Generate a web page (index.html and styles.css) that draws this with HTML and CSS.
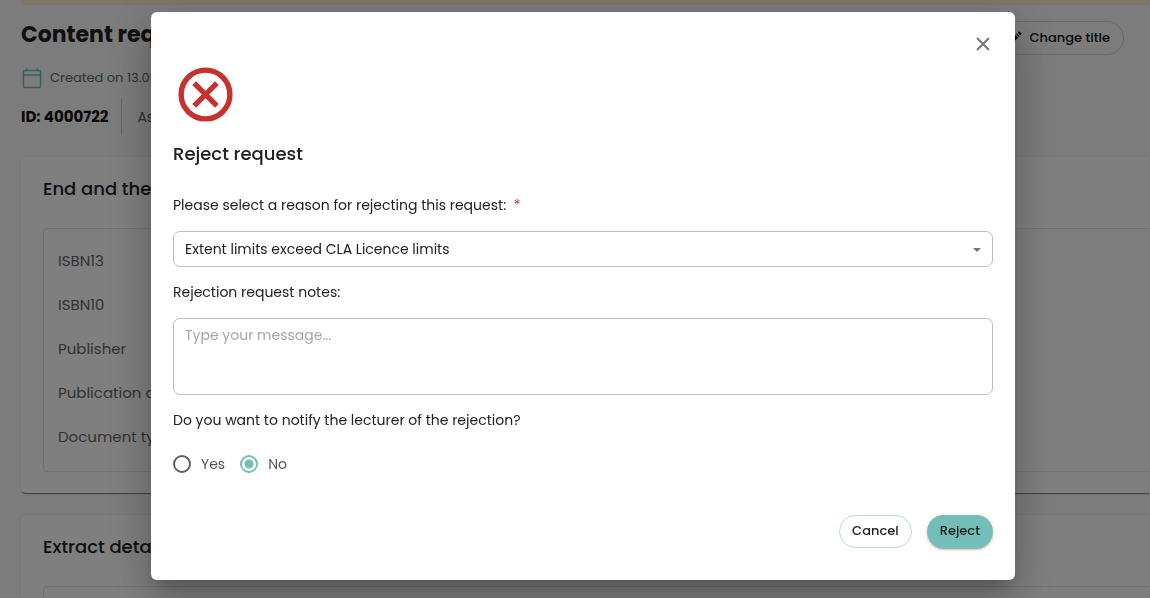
FILE: index.html
```html
<!DOCTYPE html>
<html lang="en">
<head>
  <meta charset="UTF-8">
  <meta name="viewport" content="width=device-width, initial-scale=1.0">
  <title>Content request</title>
  <link rel="stylesheet" href="styles.css">
</head>
<body>
  <main class="page">
    <div class="banner"></div>

    <header class="page-header">
      <h1>Content request</h1>
      <button type="button" class="btn btn-outline btn-title">
        <svg class="pencil" viewBox="0 0 24 24" aria-hidden="true">
          <path d="M3 17v4h4l9.500-9.500-4-4zM17.500 10.500l1.500-1.500-4-4-1.500 1.500zM20 8l1.500-1.500a1 1 0 0 0 0-1.500l-2.500-2.500a1 1 0 0 0-1.500 0l-1.500 1.500z"/>
        </svg>
        Change title
      </button>
    </header>

    <div class="created">
      <svg class="calendar" viewBox="0 0 21 21" aria-hidden="true">
        <rect x="2.500" y="2.500" width="17" height="17" rx="1"/>
        <path d="M2.500 7h17M5.500 0.500v3M16.500 0.500v3"/>
      </svg>
      <span>Created on 13.05</span>
    </div>

    <div class="meta">
      <strong>ID: 4000722</strong>
      <span class="assigned">Assigned</span>
    </div>

    <section class="card">
      <h2>End and the</h2>
      <ul class="details">
        <li>ISBN13</li>
        <li>ISBN10</li>
        <li>Publisher</li>
        <li>Publication date</li>
        <li>Document type</li>
      </ul>
    </section>

    <section class="card">
      <h2>Extract details</h2>
      <ul class="details"></ul>
    </section>
  </main>

  <div class="overlay">
    <form class="modal" role="dialog" aria-modal="true" aria-labelledby="modal-title">
      <button type="button" class="close" aria-label="Close">
        <svg viewBox="0 0 20 20" aria-hidden="true"><path d="M4 4l12 12M16 4L4 16"/></svg>
      </button>
      <svg class="reject-icon" viewBox="0 0 24 24" aria-hidden="true">
        <circle cx="12" cy="12" r="9"/>
        <path d="M7.800 7.800l8.400 8.400M16.200 7.800l-8.400 8.400"/>
      </svg>
      <h2 id="modal-title">Reject request</h2>

      <label for="reason">Please select a reason for rejecting this request: <span class="required">*</span></label>
      <div class="select-wrap">
        <select id="reason">
          <option>Extent limits exceed CLA Licence limits</option>
        </select>
      </div>

      <label for="notes">Rejection request notes:</label>
      <textarea id="notes" placeholder="Type your message..."></textarea>

      <fieldset class="notify">
        <legend>Do you want to notify the lecturer of the rejection?</legend>
        <div class="radios">
          <label><input type="radio" name="notify" value="yes">Yes</label>
          <label><input type="radio" name="notify" value="no" checked>No</label>
        </div>
      </fieldset>

      <div class="actions">
        <button type="button" class="btn btn-outline">Cancel</button>
        <button type="submit" class="btn btn-primary">Reject</button>
      </div>
    </form>
  </div>
</body>
</html>
```

FILE: styles.css
```css
* {
  box-sizing: border-box;
}
body {
  margin: 0;
  height: 100vh;
  overflow: hidden;
  font-family: "Poppins", "Inter", sans-serif;
  font-size: 14px;
  line-height: 24px;
  color: #212121;
  background: #f8f8f8;
}
h1, h2 {
  margin: 0;
}
button, select, textarea {
  font-family: inherit;
}

/* page behind the dialog */
.page {
  height: 100%;
  padding-left: 21px;
  overflow: hidden;
}
.banner {
  height: 5px;
  background: #fbeed3;
}
.page-header {
  display: flex;
  justify-content: space-between;
  align-items: center;
  margin-top: 16px;
  padding-right: 26px;
}
.page-header h1 {
  padding-bottom: 6px;
  font-size: 22px;
  line-height: 28px;
}
.btn {
  height: 33px;
  padding: 0 12px 1px;
  border: 1px solid transparent;
  border-radius: 17px;
  font-size: 13px;
  font-weight: 500;
  line-height: 20px;
  color: #212121;
}
.btn-outline {
  background: transparent;
  border-color: #b5dcd8;
}
.btn-primary {
  background: #74beb9;
  box-shadow: 0 3px 1px -2px rgba(0, 0, 0, 0.2), 0 2px 2px rgba(0, 0, 0, 0.14), 0 1px 5px rgba(0, 0, 0, 0.12);
}
.btn-title {
  display: flex;
  align-items: center;
  gap: 6px;
  height: 34px;
  padding: 0 13px;
  color: #111;
}
.pencil {
  width: 16px;
  height: 16px;
}
.created {
  display: flex;
  align-items: center;
  gap: 8px;
  margin-top: 11px;
  font-size: 13px;
  color: #666;
}
.calendar {
  width: 21px;
  height: 21px;
  fill: none;
  stroke: #74beb9;
  stroke-width: 1.5;
}
.meta {
  display: flex;
  align-items: center;
  gap: 13px;
  margin-top: 9px;
  font-size: 15px;
}
.meta strong {
  color: #111;
}
.assigned {
  padding: 6px 15px;
  border-left: 1px solid #ccc;
  font-size: 14px;
  color: #666;
}
.card {
  margin-bottom: 22px;
  padding: 18px 0 21px 22px;
  background: #fff;
  border-radius: 5px 0 0 5px;
  box-shadow: 0 2px 1px -1px rgba(0, 0, 0, 0.5), 0 0 2px rgba(0, 0, 0, 0.14);
}
.meta + .card {
  margin-top: 22px;
}
.card h2 {
  font-size: 18px;
  font-weight: 500;
  line-height: 28px;
}
.details {
  min-height: 60px;
  margin: 25px 0 0;
  padding: 10px 14px 12px;
  border: 1px solid #e4e4e4;
  border-right: 0;
  border-radius: 4px 0 0 4px;
  list-style: none;
  font-size: 15px;
  color: #666;
}
.details li {
  padding: 10px 0;
}

/* dialog */
.overlay {
  position: fixed;
  inset: 0;
  padding: 12px 135px 18px 151px;
  background: rgba(0, 0, 0, 0.5);
}
.modal {
  display: flex;
  flex-direction: column;
  padding: 22px 22px 32px;
  background: #fff;
  border-radius: 6px;
  box-shadow: 0 11px 15px -7px rgba(0, 0, 0, 0.2), 0 24px 38px 3px rgba(0, 0, 0, 0.14), 0 9px 46px 8px rgba(0, 0, 0, 0.12);
}
.close {
  display: flex;
  align-self: flex-end;
  padding: 0;
  border: 0;
  background: none;
}
.close svg {
  width: 20px;
  height: 20px;
  stroke: #757575;
  stroke-width: 1.8;
}
.reject-icon {
  width: 65px;
  height: 65px;
  margin-top: 8px;
  fill: none;
  stroke: #c8322e;
  stroke-width: 2;
}
.modal h2 {
  margin: 13px 0 25px;
  font-size: 18px;
  font-weight: 500;
  line-height: 28px;
}
.required {
  margin-left: 4px;
  color: #d32f2f;
}
.select-wrap {
  position: relative;
  margin: 14px 0 13px;
}
.select-wrap::after {
  content: "";
  position: absolute;
  top: 17px;
  right: 12px;
  border: 4px solid transparent;
  border-top-color: #757575;
  border-bottom: 0;
  pointer-events: none;
}
select, textarea {
  display: block;
  width: 100%;
  border: 1px solid #bdbdbd;
  border-radius: 7px;
  background: #fff;
  color: #212121;
  font-size: 14px;
}
select {
  height: 36px;
  padding: 0 11px;
  appearance: none;
}
textarea {
  height: 77px;
  margin: 14px 0 13px;
  padding: 4px 11px;
  line-height: 24px;
  resize: none;
}
textarea::placeholder {
  color: #a6a6a6;
}
.notify {
  margin: 0;
  padding: 0;
  border: 0;
}
.notify legend {
  padding: 0;
}
.radios {
  display: flex;
  gap: 15px;
  margin-top: 20px;
}
.radios label {
  display: flex;
  align-items: center;
  gap: 10px;
  color: #555;
}
.radios input {
  width: 18px;
  height: 18px;
  margin: 0;
  border: 2px solid #616161;
  border-radius: 50%;
  appearance: none;
}
.radios input:checked {
  border-color: #74beb9;
  background: radial-gradient(circle, #74beb9 4px, transparent 5px);
}
.actions {
  display: flex;
  justify-content: flex-end;
  gap: 15px;
  margin-top: 39px;
}
```
